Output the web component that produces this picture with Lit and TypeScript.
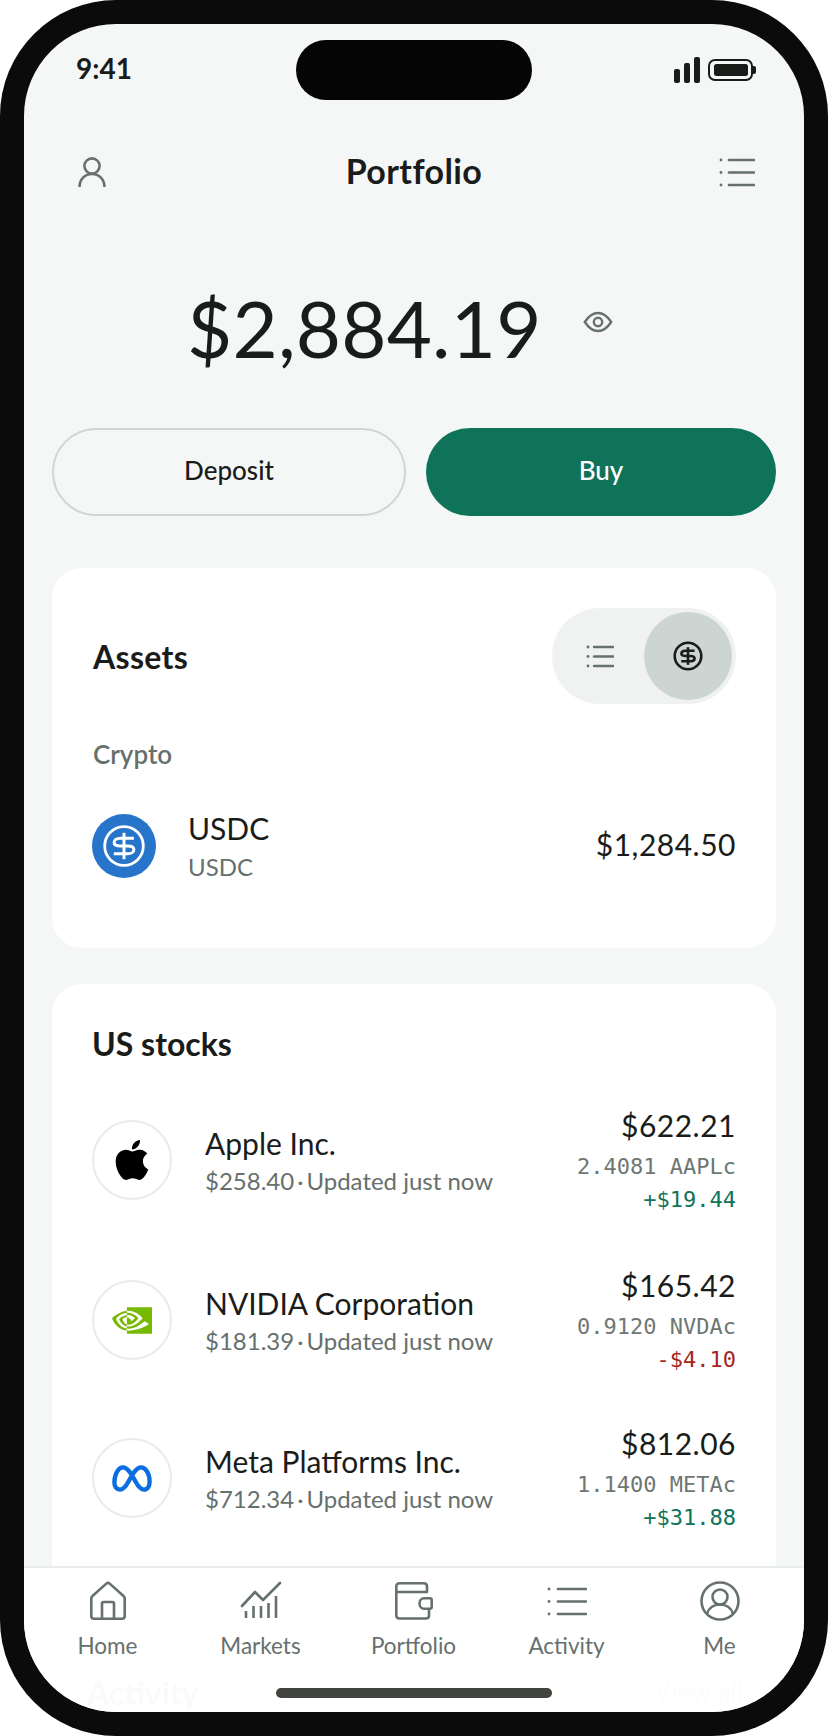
import { LitElement, html, css, svg } from "lit";
import { customElement } from "lit/decorators.js";

const listIcon = (w: number, h: number) => svg`
  <svg class="ico" width=${w + 2} height=${h + 4} viewBox="0 0 ${w + 2} ${h + 4}" fill="none" stroke="currentColor">
    ${[0, 1, 2].map((i) => {
      const y = 2 + (i * h) / 2;
      const dx = w * 0.235;
      return svg`<circle cx="2" cy=${y} r="1.4" fill="currentColor" stroke="none"></circle>
        <line x1=${dx + 2} x2=${w + 1} y1=${y} y2=${y} stroke-width="2.6" stroke-linecap="round"></line>`;
    })}
  </svg>`;

const personIcon = svg`<svg class="ico" width="30" height="32" viewBox="0 0 30 32" fill="none" stroke="currentColor" stroke-width="2.6">
  <circle cx="15" cy="10" r="7.6"></circle><path d="M2.5 31c0-7.6 5.4-13 12.5-13s12.5 5.400 12.500 13"></path></svg>`;

const eyeIcon = svg`<svg class="ico" width="30" height="22" viewBox="0 0 30 22" fill="none" stroke="currentColor" stroke-width="2.400">
  <path d="M1.800 11C6 4.600 10 2 15 2s9 2.600 13.200 9C24 17.400 20 20 15 20S6 17.400 1.800 11Z"></path><circle cx="15" cy="11" r="4.200"></circle></svg>`;

const dollarGlyph = (c: string, sw: number) => svg`<g fill="none" stroke=${c} stroke-width=${sw} stroke-linecap="butt">
  <path d="M6.600 -5.200H-2.400C-5 -5.200 -6.600 -3.800 -6.600 -2.300C-6.600 -.8 -5 0 -2.400 0H2.400C5 0 6.600 .9 6.600 2.500C6.600 4 5 5.200 2.400 5.200H-6.800"></path>
  <path d="M0 -8.800V8.800"></path></g>`;

const appleLogo = svg`<svg class="logo" width="40" height="40" viewBox="0 0 24 24" fill="#000"><path d="M12.152 6.896c-.948 0-2.415-1.078-3.96-1.04-2.04.027-3.91 1.183-4.961 3.014-2.117 3.675-.546 9.103 1.519 12.09 1.013 1.454 2.208 3.09 3.792 3.039 1.52-.065 2.09-.987 3.935-.987 1.831 0 2.35.987 3.96.948 1.637-.026 2.676-1.48 3.676-2.948 1.156-1.688 1.636-3.325 1.662-3.415-.039-.013-3.182-1.221-3.22-4.857-.026-3.04 2.48-4.494 2.597-4.559-1.429-2.09-3.623-2.324-4.39-2.376-2-.156-3.675 1.09-4.61 1.09zM15.53 3.83c.843-1.012 1.4-2.427 1.245-3.83-1.207.052-2.662.805-3.532 1.818-.78.896-1.454 2.338-1.273 3.714 1.338.104 2.715-.688 3.559-1.701"></path></svg>`;

const nvidiaLogo = svg`<svg class="logo" width="40" height="27" viewBox="0 4 24 16" fill="#76b900"><path d="M8.948 8.798v-1.43a6.7 6.7 0 0 1 .424-.018c3.922-.124 6.493 3.374 6.493 3.374s-2.774 3.851-5.75 3.851c-.398 0-.787-.062-1.158-.185v-4.346c1.528.185 1.837.857 2.747 2.385l2.04-1.714s-1.492-1.952-4-1.952a6.016 6.016 0 0 0-.796.035m0-4.735v2.138l.424-.027c5.45-.185 9.01 4.47 9.01 4.47s-4.08 4.964-8.33 4.964c-.37 0-.733-.035-1.095-.097v1.325c.3.035.61.062.91.062 3.957 0 6.82-2.023 9.593-4.408.459.371 2.34 1.263 2.73 1.652-2.633 2.208-8.772 3.984-12.253 3.984-.335 0-.653-.018-.971-.053v1.864H24V4.063zm0 10.326v1.131c-3.657-.654-4.673-4.46-4.673-4.46s1.758-1.944 4.673-2.262v1.237H8.94c-1.528-.186-2.73 1.245-2.73 1.245s.68 2.412 2.739 3.11M2.456 10.9s2.164-3.197 6.5-3.533V6.201C4.153 6.59 0 10.653 0 10.653s2.35 6.802 8.948 7.42v-1.237c-4.84-.6-6.492-5.936-6.492-5.936z"></path></svg>`;

const metaLogo = svg`<svg class="logo" width="40" height="27" viewBox="0 0 40 27" fill="none" stroke="#0a6ee0" stroke-width="4.400"><path d="M2.400 17.500C2.400 9 6.500 2.400 11 2.400C15.500 2.400 19 8 23.500 16.500C26.500 22 29 24.600 32 24.600C35.400 24.600 37.600 21.500 37.600 16.500C37.600 8.500 33.500 2.400 29 2.400C24.500 2.400 21 8 16.500 16.500C13.500 22 11 24.600 8 24.600C4.600 24.600 2.400 21.800 2.400 17.500Z"></path></svg>`;

const tabIcons = {
  home: svg`<svg class="ico" width="38" height="40" viewBox="0 0 38 40" fill="none" stroke="currentColor" stroke-width="2.600" stroke-linejoin="round">
    <path d="M2.300 17.500C2.300 16.500 2.700 15.700 3.500 15L17.300 2.600C18.300 1.700 19.700 1.700 20.700 2.600L34.500 15C35.300 15.700 35.700 16.500 35.700 17.500V35C35.700 36.700 34.700 37.700 33 37.700H5C3.300 37.700 2.300 36.700 2.300 35Z"></path>
    <path d="M13 37.700V22.500C13 21.500 13.500 21 14.500 21H23.500C24.500 21 25 21.500 25 22.500V37.700"></path></svg>`,
  markets: svg`<svg class="ico" width="42" height="40" viewBox="0 0 42 40" fill="none" stroke="currentColor" stroke-width="2.600">
    <path d="M2 25L15 11L23 19L40 2" stroke-linecap="round" stroke-linejoin="round"></path>
    <path d="M6 30V37M13.500 25V37M21 25V37M28.500 22V37M36 15V37" stroke-linecap="butt"></path></svg>`,
  wallet: svg`<svg class="ico" width="40" height="40" viewBox="0 0 40 40" fill="none" stroke="currentColor" stroke-width="2.600" stroke-linejoin="round">
    <path d="M35 17.500V34.500C35 36.500 34 37.500 32 37.500H5.500C3.500 37.500 2.300 36.500 2.300 34.500V5.500C2.300 3.500 3.500 2.300 5.500 2.300H30C32 2.300 33 3.500 33 5.500V11H2.300"></path>
    <path d="M30 17.300H36C37.200 17.300 37.700 18 37.700 19V26C37.700 27 37.200 27.700 36 27.700H30C27.500 27.700 25.500 25.300 25.500 22.500C25.500 19.700 27.500 17.300 30 17.300Z" fill="#fff"></path></svg>`,
  me: svg`<svg class="ico" width="40" height="40" viewBox="0 0 40 40" fill="none" stroke="currentColor" stroke-width="2.600">
    <circle cx="20" cy="20" r="18.500"></circle><circle cx="20" cy="16" r="7.500"></circle><path d="M7 33c1.500-6 6.500-9.500 13-9.500S31.500 27 33 33"></path></svg>`,
};

interface Stock { name: string; price: string; value: string; qty: string; change: string; up: boolean; logo: unknown; }

const stocks: Stock[] = [
  { name: "Apple Inc.", price: "$258.40", value: "$622.21", qty: "2.4081 AAPLc", change: "+$19.44", up: true, logo: appleLogo },
  { name: "NVIDIA Corporation", price: "$181.39", value: "$165.42", qty: "0.9120 NVDAc", change: "-$4.10", up: false, logo: nvidiaLogo },
  { name: "Meta Platforms Inc.", price: "$712.34", value: "$812.06", qty: "1.1400 METAc", change: "+$31.88", up: true, logo: metaLogo },
];

const tabs = [
  { label: "Home", icon: tabIcons.home },
  { label: "Markets", icon: tabIcons.markets },
  { label: "Portfolio", icon: tabIcons.wallet },
  { label: "Activity", icon: listIcon(38, 25) },
  { label: "Me", icon: tabIcons.me },
];

@customElement("app-root")
export class AppRoot extends LitElement {
  static styles = css`
    :host { display: block; width: 828px; height: 1736px; background: #fff; font-family: "Lato", "Noto Sans", sans-serif; color: #1a1c1a; }
    * { box-sizing: border-box; }
    .ico, .logo { display: block; flex: none; }
    .phone { width: 828px; height: 1736px; padding: 24px; background: #0b0b0b; border-radius: 116px; }
    .screen { position: relative; width: 780px; height: 1688px; overflow: hidden; background: #f5f7f7; border-radius: 92px; }
    .island { position: absolute; left: 272px; top: 16px; width: 236px; height: 60px; border-radius: 30px; background: #050505; }
    .status { height: 92px; padding: 0 48px 0 52px; display: flex; align-items: center; justify-content: space-between; }
    .time { font-size: 28px; font-weight: 700; line-height: 34px; margin-bottom: 4px; }
    .sys { display: flex; align-items: center; gap: 8px; color: #1a1c1a; }
    .header { height: 112px; padding: 0 49px 0 53px; display: flex; align-items: center; justify-content: space-between; color: #66706c; }
    .title { font-size: 34px; font-weight: 700; color: #1a1c1a; letter-spacing: .4px; margin-left: 2px; padding-bottom: 4px; }
    .balance { height: 200px; padding: 0 0 12px 163px; display: flex; align-items: center; gap: 44px; color: #66706c; }
    .amount { font-size: 78px; font-weight: 400; color: #1a1c1a; font-variant-numeric: tabular-nums; letter-spacing: .2px; line-height: 1; width: 352px; white-space: nowrap; padding-top: 12px; }
    .actions { display: flex; gap: 20px; padding: 0 28px; margin-bottom: 52px; }
    .btn { height: 88px; border-radius: 44px; display: flex; align-items: center; justify-content: center; font-size: 26px; font-weight: 500; padding-bottom: 4px; }
    .btn.out { width: 354px; border: 2px solid #ced6d3; color: #1a1c1a; }
    .btn.fill { width: 350px; background: #0f735a; color: #fff; }
    .card { background: #fff; border-radius: 30px; margin: 0 28px 36px; padding: 0 40px; }
    .assets { height: 380px; padding-top: 40px; }
    .assets .h2 { letter-spacing: .3px; margin-left: 1px; }
    .row-head { display: flex; align-items: center; justify-content: space-between; height: 96px; }
    .h2 { font-size: 32px; font-weight: 700; color: #1a1c1a; }
    .toggle { width: 184px; height: 96px; border-radius: 48px; background: #f0f2f2; padding: 4px; display: flex; align-items: center; justify-content: space-between; color: #66706c; }
    .toggle .list { width: 88px; display: flex; justify-content: flex-end; padding-right: 30px; }
    .thumb { width: 88px; height: 88px; border-radius: 50%; background: #cdd5d2; display: flex; align-items: center; justify-content: center; }
    .cat { height: 44px; margin-top: 28px; display: flex; align-items: center; font-size: 26px; font-weight: 600; color: #66706c; margin-left: 1px; }
    .usdc { display: flex; align-items: center; height: 64px; margin-top: 38px; }
    .usdc .info { margin-left: 32px; flex: 1; padding-top: 2px; }
    .n { font-size: 30px; line-height: 36px; color: #1a1c1a; }
    .s { font-size: 24px; line-height: 36px; color: #66706c; white-space: nowrap; }
    .usdc .s { padding-top: 4px; line-height: 34px; }
    .usd { font-size: 30px; font-variant-numeric: tabular-nums; color: #1a1c1a; letter-spacing: .5px; padding-bottom: 4px; }
    .stocks { padding-top: 36px; height: 678px; margin-bottom: 0; }
    .stocks .h2 { line-height: 48px; }
    .rows { margin-top: 12px; }
    .stock { height: 160px; display: flex; align-items: center; }
    .stock:last-child { height: 156px; }
    .circle { width: 80px; height: 80px; border-radius: 50%; border: 2px solid #e8ecec; display: flex; align-items: center; justify-content: center; flex: none; }
    .stock .info { margin-left: 33px; flex: 1; padding-top: 2px; }
    .stock .n { line-height: 40px; }
    .dot { margin: 0 3px 0 3px; }
    .right { text-align: right; padding-bottom: 4px; }
    .v { font-size: 30px; line-height: 38px; font-variant-numeric: tabular-nums; color: #1a1c1a; letter-spacing: .5px; }
    .q { font-family: "DejaVu Sans Mono", monospace; font-size: 22px; line-height: 46px; color: #6f7773; }
    .c { font-family: "DejaVu Sans Mono", monospace; font-size: 22px; line-height: 20px; }
    .up { color: #0f735a; }
    .down { color: #a3261c; }
    .under { display: flex; justify-content: space-between; align-items: center; margin: 0 28px; padding: 0 33px 0 35px; height: 60px; }
    .under .a { font-size: 32px; font-weight: 700; }
    .under .b { font-size: 26px; color: #66706c; }
    .tabbar { position: absolute; left: 0; right: 0; top: 1542px; height: 146px; background: rgba(255, 255, 255, .98); border-top: 2px solid #e8ecec; display: flex; padding: 12px 7px 0; color: #66706c; }
    .tab { width: 153px; display: flex; flex-direction: column; align-items: center; }
    .tab .slot { height: 42px; display: flex; align-items: center; justify-content: center; }
    .tab .lb { margin-top: 9px; font-size: 22.5px; line-height: 30px; }
    .indicator { position: absolute; left: 252px; top: 1664px; width: 276px; height: 10px; border-radius: 5px; background: #41433f; }
  `;

  render() {
    return html`<div class="phone"><div class="screen">
      <div class="status">
        <span class="time">9:41</span>
        <div class="sys">
          <svg class="ico" width="26" height="26" viewBox="0 0 26 26" fill="currentColor">
            <rect x="0" y="12" width="6" height="14" rx="2"></rect><rect x="10" y="6" width="6" height="20" rx="2"></rect><rect x="20" y="0" width="6" height="26" rx="2"></rect>
          </svg>
          <svg class="ico" width="48" height="22" viewBox="0 0 48 22" fill="none">
            <rect x="1" y="1" width="43" height="20" rx="6" stroke="currentColor" stroke-width="2"></rect>
            <rect x="6" y="5" width="34" height="12" rx="2.500" fill="currentColor"></rect>
            <path d="M44 7h2a2 2 0 0 1 2 2v4a2 2 0 0 1-2 2h-2Z" fill="currentColor"></path>
          </svg>
        </div>
      </div>
      <div class="island"></div>

      <div class="header">${personIcon}<span class="title">Portfolio</span>${listIcon(34, 25)}</div>

      <div class="balance"><span class="amount">$2,884.19</span>${eyeIcon}</div>

      <div class="actions">
        <div class="btn out">Deposit</div>
        <div class="btn fill">Buy</div>
      </div>

      <section class="card assets">
        <div class="row-head">
          <span class="h2">Assets</span>
          <div class="toggle">
            <div class="list">${listIcon(26, 19)}</div>
            <div class="thumb">
              <svg class="ico" width="30" height="30" viewBox="-15 -15 30 30"><circle r="13.300" fill="none" stroke="#1a1c1a" stroke-width="2.600"></circle>${dollarGlyph("#1a1c1a", 2.6)}</svg>
            </div>
          </div>
        </div>
        <div class="cat">Crypto</div>
        <div class="usdc">
          <svg class="ico" width="64" height="64" viewBox="-32 -32 64 64"><circle r="32" fill="#2775ca"></circle><circle r="19.300" fill="none" stroke="#fff" stroke-width="2.800"></circle><g transform="scale(1.500)">${dollarGlyph("#fff", 2)}</g></svg>
          <div class="info"><div class="n">USDC</div><div class="s">USDC</div></div>
          <div class="usd">$1,284.50</div>
        </div>
      </section>

      <section class="card stocks">
        <div class="h2">US stocks</div>
        <div class="rows">
          ${stocks.map((s) => html`<div class="stock">
            <div class="circle">${s.logo}</div>
            <div class="info"><div class="n">${s.name}</div><div class="s">${s.price}<span class="dot">·</span>Updated just now</div></div>
            <div class="right">
              <div class="v">${s.value}</div>
              <div class="q">${s.qty}</div>
              <div class="c ${s.up ? "up" : "down"}">${s.change}</div>
            </div>
          </div>`)}
        </div>
      </section>

      <div class="under"><span class="a">Activity</span><span class="b">View all</span></div>

      <nav class="tabbar">
        ${tabs.map((t) => html`<div class="tab"><div class="slot">${t.icon}</div><div class="lb">${t.label}</div></div>`)}
      </nav>
      <div class="indicator"></div>
    </div></div>`;
  }
}
